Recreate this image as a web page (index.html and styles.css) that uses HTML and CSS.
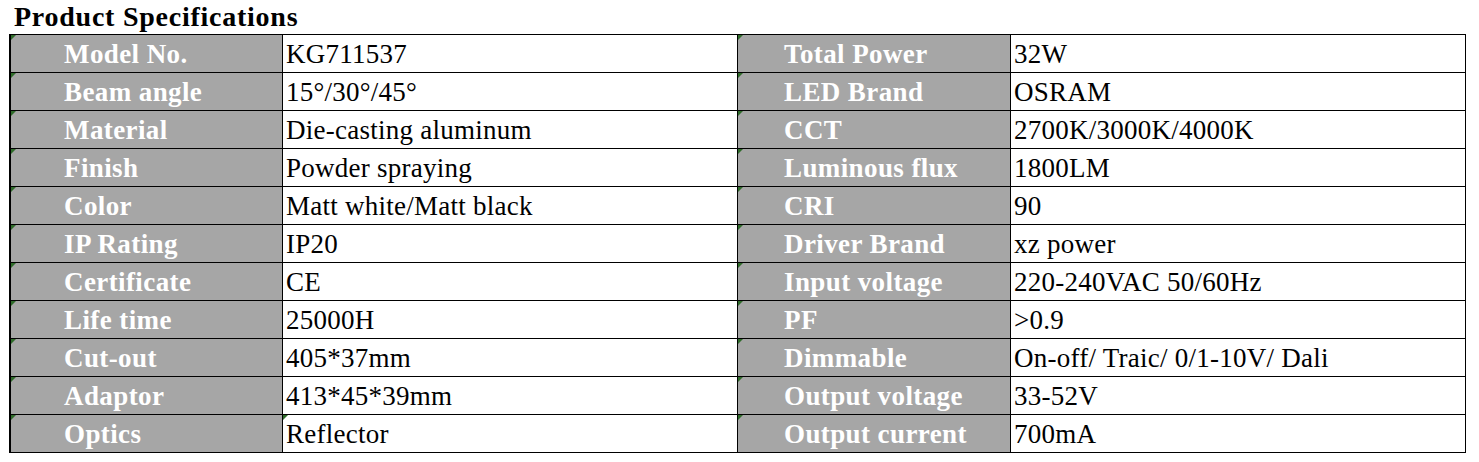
FILE: index.html
```html
<!DOCTYPE html>
<html lang="en">
<head>
<meta charset="utf-8">
<title>Product Specifications</title>
<link rel="stylesheet" href="styles.css">
</head>
<body>
<h1 class="title">Product Specifications</h1>
<div class="spec">
  <div class="lab l1 mark">Model No.</div><div class="val">KG711537</div><div class="lab l2 mark">Total Power</div><div class="val">32W</div>
  <div class="lab l1 mark">Beam angle</div><div class="val">15°/30°/45°</div><div class="lab l2 mark">LED Brand</div><div class="val">OSRAM</div>
  <div class="lab l1 mark">Material</div><div class="val">Die-casting aluminum</div><div class="lab l2 mark">CCT</div><div class="val">2700K/3000K/4000K</div>
  <div class="lab l1 mark">Finish</div><div class="val">Powder spraying</div><div class="lab l2 mark">Luminous flux</div><div class="val">1800LM</div>
  <div class="lab l1 mark">Color</div><div class="val">Matt white/Matt black</div><div class="lab l2 mark">CRI</div><div class="val">90</div>
  <div class="lab l1 mark">IP Rating</div><div class="val">IP20</div><div class="lab l2 mark">Driver Brand</div><div class="val">xz power</div>
  <div class="lab l1 mark">Certificate</div><div class="val">CE</div><div class="lab l2 mark">Input voltage</div><div class="val">220-240VAC 50/60Hz</div>
  <div class="lab l1 mark">Life time</div><div class="val">25000H</div><div class="lab l2 mark">PF</div><div class="val">&gt;0.9</div>
  <div class="lab l1 mark">Cut-out</div><div class="val">405*37mm</div><div class="lab l2 mark">Dimmable</div><div class="val">On-off/ Traic/ 0/1-10V/ Dali</div>
  <div class="lab l1 mark">Adaptor</div><div class="val">413*45*39mm</div><div class="lab l2 mark">Output voltage</div><div class="val">33-52V</div>
  <div class="lab l1 mark">Optics</div><div class="val mark">Reflector</div><div class="lab l2 mark">Output current</div><div class="val">700mA</div>
</div>
</body>
</html>
```

FILE: styles.css
```css
html, body {
  margin: 0;
  padding: 0;
  background: #ffffff;
}

body {
  font-family: "Liberation Serif", "Times New Roman", serif;
  color: #000;
}

.title {
  margin: 0;
  padding-left: 14px;
  height: 34px;
  font-size: 28px;
  line-height: 34px;
  font-weight: bold;
  letter-spacing: 0.75px;
  white-space: nowrap;
}

.spec {
  margin-left: 9px;
  width: 1457px;
  box-sizing: border-box;
  display: grid;
  grid-template-columns: 272px 455px 273px 455px;
  grid-auto-rows: 38px;
  border-top: 1px solid #000;
  border-left: 2px solid #000;
}

.spec > div {
  position: relative;
  box-sizing: border-box;
  border-right: 1px solid #000;
  border-bottom: 1px solid #000;
  padding-top: 1px;
  font-size: 27px;
  line-height: 36px;
  white-space: nowrap;
  overflow: hidden;
}

.lab {
  background: #a6a6a6;
  color: #ffffff;
  font-weight: bold;
  letter-spacing: 0.4px;
}

.l1 {
  padding-left: 53px;
}

.l2 {
  padding-left: 46px;
}

.val {
  background: #ffffff;
  padding-left: 3px;
  letter-spacing: 0.25px;
}

.mark::before {
  content: "";
  position: absolute;
  left: 0;
  top: 0;
  width: 0;
  height: 0;
  border-top: 5px solid #2f6b2a;
  border-right: 5px solid transparent;
}
```
